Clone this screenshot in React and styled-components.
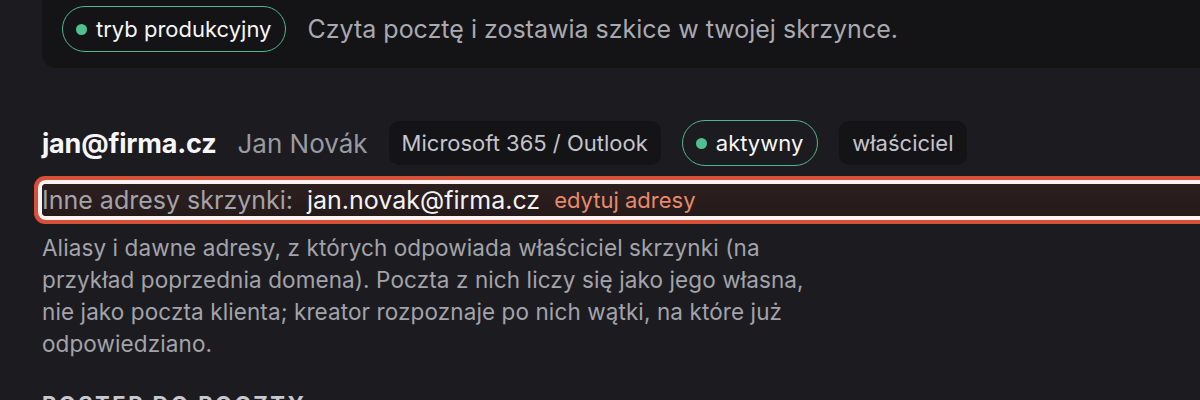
import styled, { createGlobalStyle } from 'styled-components';

const Global = createGlobalStyle`
  html, body {
    margin: 0;
    padding: 0;
    background: #1c1c20;
    overflow: hidden;
  }
  body {
    font-family: 'Inter', 'Noto Sans', sans-serif;
    color: #e8e8ec;
  }
`;

const Page = styled.div`
  width: 1200px;
  height: 400px;
  overflow: hidden;
  padding-left: 42px;
  box-sizing: border-box;
`;

const TopCard = styled.div`
  display: flex;
  align-items: center;
  gap: 21px;
  height: 78px;
  margin-top: -10px;
  margin-right: -40px;
  padding: 0 20px;
  background: #141416;
  border-bottom-left-radius: 14px;
`;

const Pill = styled.span`
  display: inline-flex;
  align-items: center;
  gap: 9px;
  height: 46px;
  box-sizing: border-box;
  padding: 0 14px 0 13px;
  border: 1.5px solid #52b68a;
  border-radius: 23px;
  font-size: 22px;
  color: #f6f6f8;
  white-space: nowrap;
`;

const Dot = styled.span`
  width: 11px;
  height: 11px;
  border-radius: 50%;
  background: #4fc08f;
`;

const Lead = styled.span`
  font-size: 25px;
  color: #a9a9b1;
  white-space: nowrap;
`;

const Account = styled.div`
  display: flex;
  align-items: center;
  gap: 21px;
  margin-top: 52px;
`;

const Email = styled.span`
  font-size: 27px;
  font-weight: 700;
  color: #f6f6f8;
  letter-spacing: -0.2px;
`;

const Name = styled.span`
  font-size: 26px;
  color: #9a9aa2;
`;

const Chip = styled.span`
  display: inline-flex;
  align-items: center;
  height: 44px;
  padding: 0 13px;
  background: #141417;
  border-radius: 10px;
  font-size: 22px;
  color: #c4c4cc;
  white-space: nowrap;
`;

const Highlight = styled.div`
  display: flex;
  align-items: center;
  gap: 14px;
  height: 32px;
  margin-top: 18px;
  margin-right: -40px;
  background: linear-gradient(#2c1f1f, #251a1a);
  border-radius: 4px;
  box-shadow: 0 0 0 4px #fbf3f0, 0 0 0 8px #d8503a;
  white-space: nowrap;
`;

const Label = styled.span`
  font-size: 25px;
  color: #a3a3ab;
`;

const Value = styled.span`
  font-size: 25px;
  color: #f2f2f4;
`;

const EditLink = styled.span`
  font-size: 22px;
  color: #e68a6e;
`;

const Help = styled.p`
  margin: 16px 0 0;
  max-width: 795px;
  font-size: 22.5px;
  letter-spacing: 0.1px;
  line-height: 32px;
  color: #a3a3ab;
`;

const SectionTitle = styled.div`
  margin-top: 31px;
  font-size: 22px;
  font-weight: 700;
  letter-spacing: 2.5px;
  color: #c8c8d0;
`;

export default function App() {
  return (
    <>
      <Global />
      <Page>
        <TopCard>
          <Pill><Dot />tryb produkcyjny</Pill>
          <Lead>Czyta pocztę i zostawia szkice w twojej skrzynce.</Lead>
        </TopCard>
        <Account>
          <Email>jan@firma.cz</Email>
          <Name>Jan Novák</Name>
          <Chip>Microsoft 365 / Outlook</Chip>
          <Pill><Dot />aktywny</Pill>
          <Chip>właściciel</Chip>
        </Account>
        <Highlight>
          <Label>Inne adresy skrzynki:</Label>
          <Value>jan.novak@firma.cz</Value>
          <EditLink>edytuj adresy</EditLink>
        </Highlight>
        <Help>
          Aliasy i dawne adresy, z których odpowiada właściciel skrzynki (na
          przykład poprzednia domena). Poczta z nich liczy się jako jego własna,
          nie jako poczta klienta; kreator rozpoznaje po nich wątki, na które już
          odpowiedziano.
        </Help>
        <SectionTitle>POSTĘP DO POCZTY</SectionTitle>
      </Page>
    </>
  );
}
